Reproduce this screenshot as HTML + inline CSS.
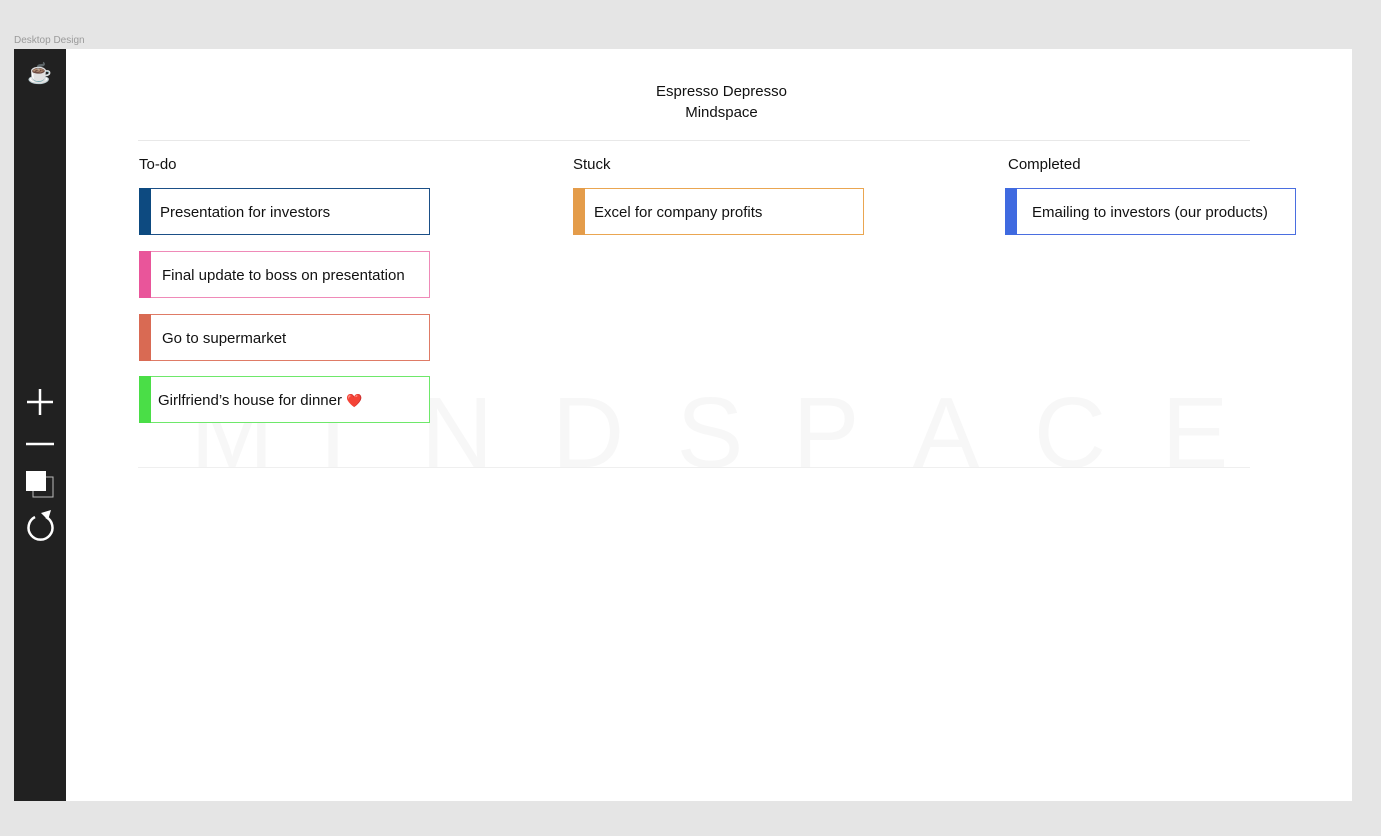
<!DOCTYPE html>
<html><head><meta charset="utf-8"><style>
body{margin:0;width:1381px;height:836px;background:#e5e5e5;position:relative;overflow:hidden;font-family:"Liberation Sans",sans-serif;}
.lbl{position:absolute;left:14px;top:35px;font-size:10px;color:#9a9a9a;}
.frame{position:absolute;left:14px;top:49px;width:1338px;height:752px;background:#fff;}
.side{position:absolute;left:14px;top:49px;width:52px;height:752px;background:#212121;}
.t{position:absolute;font-size:15px;color:#111;}
.hr{position:absolute;left:138px;width:1112px;height:1px;background:#e8e8e8;}
.card{position:absolute;width:291px;height:47px;box-sizing:border-box;border:1px solid;background:#fff;}
.card .bar{position:absolute;left:-1px;top:-1px;width:12px;height:47px;}
.card span{position:absolute;top:15px;font-size:15px;color:#111;white-space:nowrap;}
.wm{position:absolute;left:0;top:380px;width:1381px;height:87px;overflow:hidden;}
.wm b{position:absolute;top:-4px;font-size:100px;color:#f7f7f7;font-weight:normal;width:100px;margin-left:-50px;text-align:center;}
</style></head><body>
<div class="lbl">Desktop Design</div>
<div class="frame"></div>
<div class="side"></div>
<div style="position:absolute;left:27px;top:61px;font-size:20px;">☕</div>
<svg style="position:absolute;left:24px;top:386px" width="32" height="160" viewBox="0 0 32 160">
<path d="M16 3V29M3 16H29" stroke="#fff" stroke-width="2.5"/>
<path d="M2 58H30" stroke="#fff" stroke-width="2.5"/>
<rect x="9" y="91" width="20" height="20" fill="none" stroke="#bbb" stroke-width="1"/>
<rect x="2" y="85" width="20" height="20" fill="#fff"/>
<path d="M11 131 A12 12 0 1 0 22 131" fill="none" stroke="#fff" stroke-width="2.5"/>
<path d="M17 127 L27 124 L24 134 Z" fill="#fff"/>
</svg>
<div class="t" style="left:0;width:1443px;text-align:center;top:81px;line-height:21px">Espresso Depresso<br>Mindspace</div>
<div class="hr" style="top:140px"></div>
<div class="wm"><b style="left:232px">M</b><b style="left:333px">I</b><b style="left:457px">N</b><b style="left:588px">D</b><b style="left:710px">S</b><b style="left:826px">P</b><b style="left:946px">A</b><b style="left:1070px">C</b><b style="left:1195px">E</b></div>
<div class="hr" style="top:467px;background:#efefef"></div>
<div class="t" style="left:139px;top:156px">To-do</div>
<div class="t" style="left:573px;top:156px">Stuck</div>
<div class="t" style="left:1008px;top:156px">Completed</div>
<div class="card" style="left:139px;top:188px;border-color:#1b4f87"><div class="bar" style="background:#0d4a80"></div><span style="left:20px">Presentation for investors</span></div>
<div class="card" style="left:139px;top:251px;border-color:#ef8ab8"><div class="bar" style="background:#e9559a"></div><span style="left:22px">Final update to boss on presentation</span></div>
<div class="card" style="left:139px;top:314px;border-color:#df7b66"><div class="bar" style="background:#d96a53"></div><span style="left:22px">Go to supermarket</span></div>
<div class="card" style="left:139px;top:376px;border-color:#6ee86a"><div class="bar" style="background:#4ade47"></div><span style="left:18px">Girlfriend’s house for dinner <span style="position:static;color:#e22;font-size:13px">❤️</span></span></div>
<div class="card" style="left:573px;top:188px;border-color:#eaa651"><div class="bar" style="background:#e49c4a"></div><span style="left:20px">Excel for company profits</span></div>
<div class="card" style="left:1005px;top:188px;border-color:#4a6ee0"><div class="bar" style="background:#3f6ae0"></div><span style="left:26px">Emailing to investors (our products)</span></div>
</body></html>
